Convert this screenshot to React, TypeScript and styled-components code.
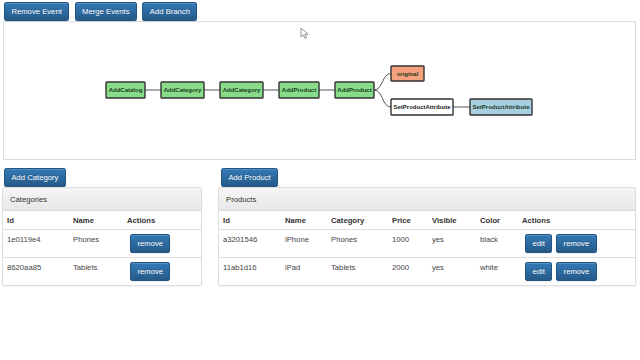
import React from "react";
import styled, { createGlobalStyle } from "styled-components";

const Global = createGlobalStyle`
  html, body { margin: 0; padding: 0; background: #fff; }
  body {
    font-family: "Liberation Sans", Arial, Helvetica, sans-serif;
    font-size: 7.7px;
    line-height: 11px;
    color: #333;
  }
  * { box-sizing: border-box; }
`;

const Page = styled.div`
  width: 640px;
  height: 360px;
  overflow: hidden;
`;

const Toolbar = styled.div`
  display: flex;
  gap: 5.5px;
  padding: 2px 0 0 4px;
`;

const Btn = styled.button`
  font-family: inherit;
  font-size: 7.7px;
  line-height: 11px;
  height: 19px;
  padding: 3px 6.4px;
  border: 1px solid #245580;
  border-radius: 2.2px;
  color: #fff;
  background-color: #2b6ba4;
  background-image: linear-gradient(to bottom, #337ab7 0%, #265a88 100%);
  box-shadow: inset 0 1px 0 rgba(255, 255, 255, 0.15), 0 1px 1px rgba(0, 0, 0, 0.075);
  text-shadow: 0 -1px 0 rgba(0, 0, 0, 0.2);
  cursor: pointer;
  white-space: nowrap;
`;

const GraphBox = styled.div`
  margin-left: 3px;
  width: 633px;
  height: 139px;
  border: 1px solid #dcdcdc;
  box-shadow: inset 0 0 1px rgba(0, 0, 0, 0.05);
  background: #fff;
  svg { display: block; }
`;

const Bottom = styled.div`
  display: flex;
  gap: 16px;
  margin-top: 8px;
  padding-left: 2px;
`;

const Column = styled.div<{ $w: number; $inset: number }>`
  width: ${(p) => p.$w}px;
  display: flex;
  flex-direction: column;
  align-items: flex-start;
  & > ${Btn} { margin-left: ${(p) => p.$inset}px; }
`;

const Panel = styled.div`
  width: 100%;
  border: 1px solid #dddddd;
  border-radius: 2px;
  box-shadow: 0 1px 2px rgba(0, 0, 0, 0.06);
  background: #fff;
  overflow: hidden;
`;

const PanelHeading = styled.div`
  padding: 5.5px 7px;
  line-height: 11px;
  color: #333;
  background-image: linear-gradient(to bottom, #f5f5f5 0%, #e8e8e8 100%);
  border-bottom: 1px solid #dddddd;
`;

const Table = styled.table`
  width: 100%;
  border-collapse: collapse;
  table-layout: fixed;
`;

const Col = styled.col<{ $w?: number }>`
  width: ${(p) => (p.$w ? `${p.$w}px` : "auto")};
`;

const Th = styled.th`
  text-align: left;
  font-weight: bold;
  color: #333;
  padding: 3.5px 4px;
  line-height: 11px;
  border-bottom: 1px solid #dddddd;
`;

const Td = styled.td`
  text-align: left;
  vertical-align: top;
  color: #444;
  padding: 4px 4px;
  line-height: 11px;
  border-top: 1px solid #dddddd;
  white-space: nowrap;
`;

const Actions = styled.div`
  display: flex;
  gap: 4px;
  margin-left: 3px;
`;

type NodeKind = "green" | "orange" | "white" | "blue";
const fills: Record<NodeKind, string> = {
  green: "#86dc88",
  orange: "#f4a27e",
  white: "#ffffff",
  blue: "#a8cfe0",
};

const nodes: { x: number; y: number; w: number; h: number; label: string; kind: NodeKind }[] = [
  { x: 102, y: 60, w: 39, h: 16, label: "AddCatalog", kind: "green" },
  { x: 157, y: 60, w: 43, h: 16, label: "AddCategory", kind: "green" },
  { x: 216, y: 60, w: 43, h: 16, label: "AddCategory", kind: "green" },
  { x: 275, y: 60, w: 40, h: 16, label: "AddProduct", kind: "green" },
  { x: 331, y: 60, w: 39, h: 16, label: "AddProduct", kind: "green" },
  { x: 387, y: 44, w: 33, h: 15, label: "original", kind: "orange" },
  { x: 387, y: 77, w: 62, h: 16, label: "SetProductAttribute", kind: "white" },
  { x: 466, y: 77, w: 62, h: 16, label: "SetProductAttribute", kind: "blue" },
];

function Graph() {
  return (
    <GraphBox>
      <svg width="631" height="137" viewBox="0 0 631 137">
        <g stroke="#555" strokeWidth="1" fill="none">
          <line x1="141" y1="68" x2="157" y2="68" />
          <line x1="200" y1="68" x2="216" y2="68" />
          <line x1="259" y1="68" x2="275" y2="68" />
          <line x1="315" y1="68" x2="331" y2="68" />
          <path d="M370 68 C379 68 378 51.5 387 51.5" />
          <path d="M370 68 C379 68 378 85 387 85" />
          <line x1="449" y1="85" x2="466" y2="85" />
        </g>
        {nodes.map((n, i) => (
          <g key={i}>
            <rect
              x={n.x}
              y={n.y}
              width={n.w}
              height={n.h}
              fill={fills[n.kind]}
              stroke="#333"
              strokeWidth="1.4"
              rx="0.8"
            />
            <text
              x={n.x + n.w / 2}
              y={n.y + n.h / 2 + 0.3}
              textAnchor="middle"
              dominantBaseline="central"
              fontFamily="Liberation Sans, Arial, sans-serif"
              fontWeight="bold"
              fontSize="6"
              fill={n.kind === "white" ? "#222" : "#1c3a1f"}
            >
              {n.label}
            </text>
          </g>
        ))}
        <path
          d="M297 6 L297 15 L299.3 12.8 L301 16.3 L302.5 15.6 L300.9 12.2 L304 12.2 Z"
          fill="#fff"
          stroke="#666"
          strokeWidth="0.7"
          strokeLinejoin="round"
        />
      </svg>
    </GraphBox>
  );
}

const categories = [
  { id: "1e0119e4", name: "Phones" },
  { id: "8620aa85", name: "Tablets" },
];

const products = [
  { id: "a3201546", name: "iPhone", category: "Phones", price: "1000", visible: "yes", color: "black" },
  { id: "11ab1d16", name: "iPad", category: "Tablets", price: "2000", visible: "yes", color: "white" },
];

export default function App() {
  return (
    <Page>
      <Global />
      <Toolbar>
        <Btn>Remove Event</Btn>
        <Btn>Merge Events</Btn>
        <Btn>Add Branch</Btn>
      </Toolbar>
      <Graph />
      <Bottom>
        <Column $w={200} $inset={2}>
          <Btn>Add Category</Btn>
          <Panel>
            <PanelHeading>Categories</PanelHeading>
            <Table>
              <colgroup>
                <Col $w={66} />
                <Col $w={54} />
                <Col />
              </colgroup>
              <thead>
                <tr>
                  <Th>Id</Th>
                  <Th>Name</Th>
                  <Th>Actions</Th>
                </tr>
              </thead>
              <tbody>
                {categories.map((c) => (
                  <tr key={c.id}>
                    <Td>{c.id}</Td>
                    <Td>{c.name}</Td>
                    <Td>
                      <Actions>
                        <Btn>remove</Btn>
                      </Actions>
                    </Td>
                  </tr>
                ))}
              </tbody>
            </Table>
          </Panel>
        </Column>
        <Column $w={418} $inset={3}>
          <Btn>Add Product</Btn>
          <Panel>
            <PanelHeading>Products</PanelHeading>
            <Table>
              <colgroup>
                <Col $w={62} />
                <Col $w={46} />
                <Col $w={61} />
                <Col $w={40} />
                <Col $w={48} />
                <Col $w={42} />
                <Col />
              </colgroup>
              <thead>
                <tr>
                  <Th>Id</Th>
                  <Th>Name</Th>
                  <Th>Category</Th>
                  <Th>Price</Th>
                  <Th>Visible</Th>
                  <Th>Color</Th>
                  <Th>Actions</Th>
                </tr>
              </thead>
              <tbody>
                {products.map((p) => (
                  <tr key={p.id}>
                    <Td>{p.id}</Td>
                    <Td>{p.name}</Td>
                    <Td>{p.category}</Td>
                    <Td>{p.price}</Td>
                    <Td>{p.visible}</Td>
                    <Td>{p.color}</Td>
                    <Td>
                      <Actions>
                        <Btn>edit</Btn>
                        <Btn>remove</Btn>
                      </Actions>
                    </Td>
                  </tr>
                ))}
              </tbody>
            </Table>
          </Panel>
        </Column>
      </Bottom>
    </Page>
  );
}
